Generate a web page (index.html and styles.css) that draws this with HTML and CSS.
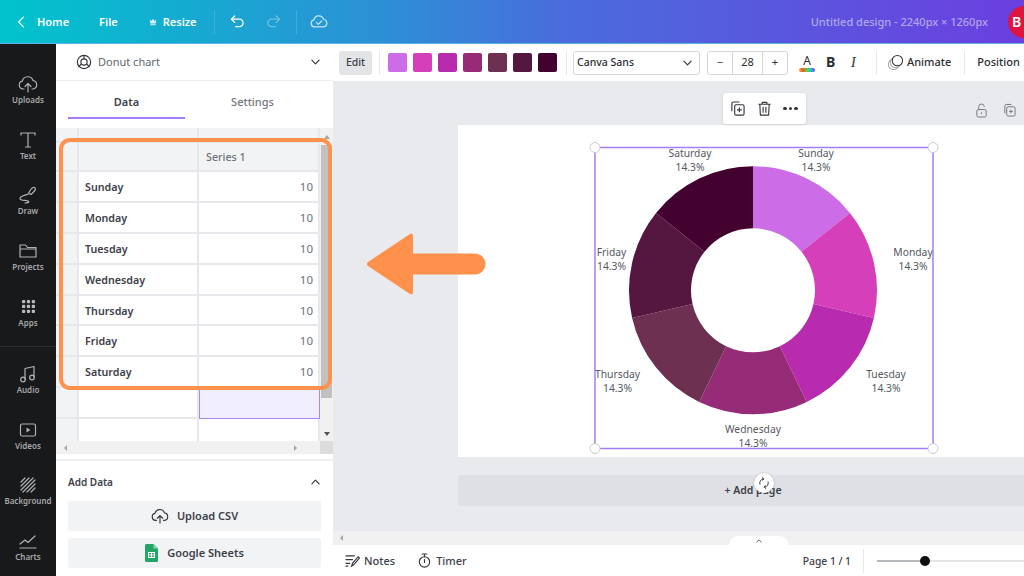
FILE: index.html
```html
<!DOCTYPE html>
<html lang="en">
<head>
<meta charset="utf-8">
<title>Donut chart editor</title>
<link rel="stylesheet" href="styles.css">
</head>
<body>
<div class="app">
  <header class="topbar">
    <svg class="ic back" viewBox="0 0 10 16"><path d="M8 2 2 8l6 6"/></svg>
    <span class="nav home">Home</span>
    <span class="nav file">File</span>
    <svg class="crown" viewBox="0 0 10 9"><path d="M1 1l2 2.500L5 .5l2 3L9 1l-.7 5.500H1.700z"/><rect x="1.700" y="7.300" width="6.600" height="1.200"/></svg>
    <span class="nav">Resize</span>
    <i class="topdiv d1"></i>
    <svg class="ic undo" viewBox="0 0 16 14"><path d="M5 1 1.500 4.500 5 8M2 4.500h8a4 4 0 0 1 0 8H6"/></svg>
    <svg class="ic redo" viewBox="0 0 16 14"><path d="M11 1l3.500 3.500L11 8M14 4.500H6a4 4 0 0 0 0 8h4"/></svg>
    <i class="topdiv d2"></i>
    <svg class="ic cloud" viewBox="0 0 20 14"><path d="M5 13a4 4 0 0 1-.6-7.900A5.500 5.500 0 0 1 15 4.500 4.300 4.300 0 0 1 15 13zM7 8l2.200 2.200L13 6.500"/></svg>
    <span class="title">Untitled design - 2240px × 1260px</span>
    <span class="avatar">B</span>
  </header>
  <div class="body">
    <nav class="rail">
      <div class="rail-item"><svg viewBox="0 0 20 18"><path d="M6 14H5a4 4 0 0 1-.6-7.900A5.500 5.500 0 0 1 15 5.500 4.300 4.300 0 0 1 15 14h-1M10 17V9M7 11.500 10 8.500l3 3"/></svg><span>Uploads</span></div>
      <div class="rail-item"><svg viewBox="0 0 20 18"><path d="M3 4V2h14v2M10 2v14M7.500 16h5"/></svg><span>Text</span></div>
      <div class="rail-item"><svg viewBox="0 0 20 18"><path d="M16.500 1.500c1.500 1 1 2.500-.5 4l-3 3-2.500-1.500 2-3c1.300-2 2.800-3.300 4-2.500zM10.500 8C6 9.500 2 10 2 12.500S8 14 10 15s0 2-3 2"/></svg><span>Draw</span></div>
      <div class="rail-item"><svg viewBox="0 0 20 18"><path d="M2 15V3h5.500l2 2.500H18V15zM2 7h16"/></svg><span>Projects</span></div>
      <div class="rail-item"><svg class="dots" viewBox="0 0 14 14"><rect x="0" y="0" width="3.500" height="3.500" rx="1"/><rect x="5.200" y="0" width="3.500" height="3.500" rx="1"/><rect x="10.500" y="0" width="3.500" height="3.500" rx="1"/><rect x="0" y="5.200" width="3.500" height="3.500" rx="1"/><rect x="5.200" y="5.200" width="3.500" height="3.500" rx="1"/><rect x="10.500" y="5.200" width="3.500" height="3.500" rx="1"/><rect x="0" y="10.500" width="3.500" height="3.500" rx="1"/><rect x="5.200" y="10.500" width="3.500" height="3.500" rx="1"/><rect x="10.500" y="10.500" width="3.500" height="3.500" rx="1"/></svg><span>Apps</span></div>
      <i class="rail-div"></i>
      <div class="rail-item"><svg viewBox="0 0 20 18"><path d="M7 14V3.500L16 1.500V12"/><circle cx="5" cy="14.500" r="2.300"/><circle cx="14" cy="12.500" r="2.300"/></svg><span>Audio</span></div>
      <div class="rail-item"><svg viewBox="0 0 20 18"><rect x="2.500" y="3" width="15" height="12" rx="1.500"/><path class="solid" d="M8.500 6.500v5l4-2.500z"/></svg><span>Videos</span></div>
      <div class="rail-item"><svg viewBox="0 0 20 18"><path d="M3 6 7 2M3 10l8-8M3 14 15 2M5 16 17 4M9 16l8-8M13 16l4-4"/></svg><span>Background</span></div>
      <div class="rail-item"><svg viewBox="0 0 20 18"><path d="M2 12l5-4 3 2.500L17 4M2 16h16"/></svg><span>Charts</span></div>
    </nav>
    <aside class="panel">
      <div class="panel-head">
        <svg class="donut-ic" viewBox="0 0 18 18"><circle cx="9" cy="9" r="7.500"/><circle cx="9" cy="9" r="3.500"/><path d="M9 1.500v4M5.800 11.500l-3 3M12.200 11.500l3 3"/></svg>
        <span class="panel-title">Donut chart</span>
        <svg class="chev" viewBox="0 0 10 6"><path d="M1 1l4 4 4-4"/></svg>
      </div>
      <div class="tabs">
        <div class="tab active">Data</div>
        <div class="tab">Settings</div>
      </div>
      <div class="sheet">
        <div class="sheet-main">
          <div class="grid">
            <div class="c hd top"></div><div class="c hd top"></div><div class="c hd top"></div>
            <div class="c hd"></div><div class="c hd"></div><div class="c hd series">Series 1</div>
            <div class="c hd"></div><div class="c day">Sunday</div><div class="c num">10</div>
            <div class="c hd"></div><div class="c day">Monday</div><div class="c num">10</div>
            <div class="c hd"></div><div class="c day">Tuesday</div><div class="c num">10</div>
            <div class="c hd"></div><div class="c day">Wednesday</div><div class="c num">10</div>
            <div class="c hd"></div><div class="c day">Thursday</div><div class="c num">10</div>
            <div class="c hd"></div><div class="c day">Friday</div><div class="c num">10</div>
            <div class="c hd"></div><div class="c day">Saturday</div><div class="c num">10</div>
            <div class="c hd"></div><div class="c"></div><div class="c picked"></div>
            <div class="c hd"></div><div class="c"></div><div class="c"></div>
          </div>
          <div class="vscroll"><i class="up"></i><i class="thumb"></i><i class="down"></i></div>
        </div>
        <div class="hscroll"><i class="lf"></i><i class="rt"></i><b></b></div>
      </div>
      <div class="add">
        <div class="add-head"><span>Add Data</span><svg class="chev" viewBox="0 0 10 6"><path d="M1 5l4-4 4 4"/></svg></div>
        <div class="btn"><svg class="btn-ic" viewBox="0 0 20 18"><path d="M6 14H5a4 4 0 0 1-.6-7.900A5.500 5.500 0 0 1 15 5.500 4.300 4.300 0 0 1 15 14h-1M10 17V9M7 11.500 10 8.500l3 3"/></svg><span class="btn-t">Upload CSV</span></div>
        <div class="btn"><svg class="sheets" viewBox="0 0 13 18"><path fill="#23a566" d="M1.500 0H8.500L13 4.500V16.500a1.500 1.500 0 0 1-1.500 1.500h-10A1.500 1.500 0 0 1 0 16.500v-15A1.500 1.500 0 0 1 1.500 0z"/><path fill="#8ed1b1" d="M8.500 0 13 4.500H8.500z"/><path fill="#fff" d="M3 8h7v6H3zm1 1v1.500h2V9zm3 0v1.500h2V9zm-3 2.500V13h2v-1.500zm3 0V13h2v-1.500z"/></svg><span class="btn-t">Google Sheets</span></div>
      </div>
    </aside>
    <main class="main">
      <div class="toolbar">
        <span class="edit">Edit</span>
        <i class="vr"></i>
        <div class="swatches">
          <i class="sw s1"></i><i class="sw s2"></i><i class="sw s3"></i><i class="sw s4"></i><i class="sw s5"></i><i class="sw s6"></i><i class="sw s7"></i>
        </div>
        <i class="vr"></i>
        <div class="fontsel"><span class="lift">Canva Sans</span><svg class="chev" viewBox="0 0 10 6"><path d="M1 1l4 4 4-4"/></svg></div>
        <div class="stepper"><span>−</span><span class="size">28</span><span>+</span></div>
        <div class="color-a"><span>A</span><i></i></div>
        <span class="bold">B</span>
        <span class="ital">I</span>
        <i class="vr"></i>
        <span class="animate"><svg viewBox="0 0 18 18"><circle cx="7" cy="11" r="5.500" class="ghost"/><circle cx="9" cy="9" r="5.500" class="ghost"/><circle cx="11" cy="7" r="5.500" class="front"/></svg><span class="lift">Animate</span></span>
        <i class="vr"></i>
        <span class="position">Position</span>
      </div>
      <div class="canvas">
        <div class="page-tools">
          <svg viewBox="0 0 14 16"><rect x="2" y="7" width="10" height="8" rx="1.500"/><path d="M4 7V4a3 3 0 0 1 6 0M7 10v2"/></svg>
          <svg viewBox="0 0 14 16"><rect x="4" y="4" width="9" height="10" rx="1.500"/><path d="M2 11V3a1.500 1.500 0 0 1 1.500-1.500H9M8.500 7v4M6.500 9h4"/></svg>
        </div>
        <div class="page">
          <svg class="chart" viewBox="0 0 566 332">
            <g transform="translate(295 165.300)">
              <path fill="#cc6ce7" d="M0-124A124 124 0 0 1 96.950-77.310L48.470-38.660A62 62 0 0 0 0-62Z"/>
              <path fill="#d53fb9" d="M96.950-77.310A124 124 0 0 1 120.890 27.590L60.450 13.800A62 62 0 0 0 48.470-38.660Z"/>
              <path fill="#b82bae" d="M120.890 27.590A124 124 0 0 1 53.800 111.720L26.900 55.860A62 62 0 0 0 60.450 13.800Z"/>
              <path fill="#962c77" d="M53.800 111.720A124 124 0 0 1-53.800 111.720L-26.900 55.860A62 62 0 0 0 26.900 55.860Z"/>
              <path fill="#6d3051" d="M-53.800 111.720A124 124 0 0 1-120.890 27.590L-60.450 13.800A62 62 0 0 0-26.900 55.860Z"/>
              <path fill="#551640" d="M-120.890 27.590A124 124 0 0 1-96.950-77.310L-48.470-38.660A62 62 0 0 0-60.450 13.800Z"/>
              <path fill="#43012f" d="M-96.950-77.310A124 124 0 0 1 0-124V-62A62 62 0 0 0-48.470-38.660Z"/>
            </g>
            <g class="labels">
              <text x="358" y="32">Sunday</text><text x="358" y="46">14.3%</text>
              <text x="455" y="131">Monday</text><text x="455" y="144.500">14.3%</text>
              <text x="428" y="253">Tuesday</text><text x="428" y="266.500">14.3%</text>
              <text x="295" y="308">Wednesday</text><text x="295" y="322">14.3%</text>
              <text x="159.500" y="253">Thursday</text><text x="159.500" y="266.500">14.3%</text>
              <text x="153.500" y="131">Friday</text><text x="153.500" y="144.500">14.3%</text>
              <text x="232" y="32">Saturday</text><text x="232" y="46">14.3%</text>
            </g>
            <rect class="sel" x="137" y="22.500" width="338" height="301"/>
            <circle class="handle" cx="137" cy="22.500" r="5"/><circle class="handle" cx="475" cy="22.500" r="5"/>
            <circle class="handle" cx="137" cy="323.500" r="5"/><circle class="handle" cx="475" cy="323.500" r="5"/>
          </svg>
        </div>
        <div class="addpage">+ Add page</div>
        <div class="float">
          <svg viewBox="0 0 16 16"><rect x="5" y="4" width="10" height="11" rx="1.500"/><path d="M2 11V2.500A1.500 1.500 0 0 1 3.500 1H10M10 7v5M7.500 9.500h5"/></svg>
          <svg viewBox="0 0 16 16"><path d="M1.500 3.500h13M5.500 3.500V1.500h5v2M3 3.500l.6 11.500h8.800L13 3.500M6.500 6.500v6M9.500 6.500v6"/></svg>
          <span class="more"><i></i><i></i><i></i></span>
        </div>
        <div class="rotate"><svg viewBox="0 0 12 12"><path d="M2 7.500A4.300 4.300 0 0 1 5.500 1.800M10 4.500a4.300 4.300 0 0 1-3.500 5.700M4 .5l1.800 1.300L4.500 3.500M8 11.500 6.200 10.200 7.500 8.500"/></svg></div>
      </div>
      <div class="mscroll"><i></i><div class="pull"><svg class="chev" viewBox="0 0 10 6"><path d="M1 5l4-4 4 4"/></svg></div></div>
      <footer class="footer">
        <svg class="ft-ic" viewBox="0 0 16 14"><path d="M1 2h9M1 6h7M1 10h4M1 13h2M7 13l1-3 6-7 1.500 1.300-6 7z"/></svg>
        <span class="ft-notes">Notes</span>
        <svg class="ft-ic" viewBox="0 0 14 16"><circle cx="7" cy="9.500" r="5.500"/><path d="M4.500 1h5M7 1v3M7 7v3"/></svg>
        <span>Timer</span>
        <span class="pageno">Page 1 / 1</span>
        <i class="vr ft-vr"></i>
        <div class="slider"><i class="fill"></i><i class="knob"></i></div>
      </footer>
    </main>
  </div>
  <div class="callout"></div>
  <svg class="arrow" viewBox="0 0 122 66"><path d="M45 3 3 31a2.500 2.500 0 0 0 0 4l42 28c1.500 1 3 0 3-2V43.500h62a10.500 10.500 0 0 0 0-21H48V5c0-2-1.500-3-3-2z"/></svg>
</div>
</body>
</html>
```
FILE: styles.css
```css
* { box-sizing: border-box; }
html, body { margin: 0; height: 100%; overflow: hidden; }
body { font-family: "Noto Sans", "Liberation Sans", sans-serif; color: #3c4048; background: #fff; }
i { display: block; font-style: normal; }
.app { position: relative; width: 1024px; height: 576px; display: flex; flex-direction: column; overflow: hidden; }

.topbar { height: 44px; flex: none; display: flex; align-items: center; color: #fff; padding-left: 17px; background: linear-gradient(90deg, #00c4cc 0%, #2d8fd6 38%, #4a6cdc 55%, #6b3fe0 100%); border-bottom: 1px solid #5fb3e6; }
.ic { fill: none; stroke: #fff; stroke-width: 1.400; stroke-linecap: round; stroke-linejoin: round; }
.back { width: 8px; height: 14px; margin-right: 12px; }
.nav { font-size: 11px; font-weight: 600; white-space: nowrap; }
.home { margin-right: 30px; }
.file { margin-right: 31px; }
.crown { width: 8px; height: 8px; fill: #dff3f8; margin-right: 6px; }
.topdiv { width: 1px; height: 24px; background: rgba(255,255,255,.15); }
.d1 { margin-left: 17px; }
.undo { width: 15px; height: 13px; margin-left: 15px; }
.redo { width: 15px; height: 13px; margin-left: 21px; opacity: .35; }
.d2 { margin-left: 15px; }
.cloud { width: 18px; height: 13px; margin-left: 13px; opacity: .75; }
.title { margin-left: auto; font-size: 11px; font-weight: 500; color: rgba(255,255,255,.5); white-space: nowrap; }
.avatar { flex: none; width: 32px; height: 32px; margin: 0 -16px 0 20px; padding-left: 4px; border-radius: 50%; background: #e0143f; font-size: 14px; font-weight: 600; line-height: 32px; }

.body { flex: 1; display: flex; min-height: 0; }
.rail { width: 56px; flex: none; background: #18191b; padding-top: 12px; display: flex; flex-direction: column; }
.rail-item { height: 55.700px; flex: none; display: flex; flex-direction: column; align-items: center; color: #a6a7a9; font-size: 8px; font-weight: 600; line-height: 10px; padding-top: 19px; }
.rail-item svg { width: 20px; height: 18px; flex: none; fill: none; stroke: #b0b1b3; stroke-width: 1.200; stroke-linecap: round; stroke-linejoin: round; }
.rail-item svg.dots { width: 13px; height: 13px; margin: 2px 0 3px; fill: #b8b9bb; stroke: none; }
.rail-item svg .solid { fill: #b0b1b3; stroke: none; }
.rail-item span { margin-top: 2px; }
.rail-div { height: 1px; flex: none; background: #2c2d30; margin: 11.500px 0 -1px; }

.panel { width: 277px; flex: none; display: flex; flex-direction: column; background: #fff; }
.panel-head { height: 37px; flex: none; display: flex; align-items: center; padding: 0 13px 0 20px; border-bottom: 1px solid #eceef0; }
.donut-ic { width: 16px; height: 16px; fill: none; stroke: #33363b; stroke-width: 1.300; margin-right: 6px; }
.panel-title { font-size: 11px; color: #62666d; flex: 1; padding-bottom: 2px; }
.chev { width: 9px; height: 6px; flex: none; fill: none; stroke: #33363b; stroke-width: 1.300; stroke-linecap: round; stroke-linejoin: round; }
.tabs { height: 38px; flex: none; display: flex; gap: 9px; padding: 0 12px; margin-bottom: 9px; }
.tab { width: 117px; text-align: center; font-size: 11px; font-weight: 500; line-height: 42px; color: #72767d; }
.tab.active { color: #3c4048; font-weight: 600; border-bottom: 2px solid #a57cf5; }

.sheet { flex: none; background: #f1f1f1; }
.sheet-main { display: flex; height: 313px; overflow: hidden; }
.grid { display: grid; grid-template-columns: 23px 120px 121px; grid-template-rows: 15px 29px repeat(9, 30.900px); flex: none; }
.c { background: #fff; border-right: 2px solid #e6e8ec; border-bottom: 2px solid #e6e8ec; min-width: 0; }
.hd { background: #f2f3f5; }
.series { font-size: 10.700px; color: #6d7178; font-weight: 500; line-height: 29px; padding-left: 7px; }
.day { font-size: 10.700px; font-weight: 600; color: #3c4048; line-height: 31px; padding-left: 6px; }
.num { font-size: 11.500px; color: #6d7178; text-align: right; line-height: 30px; padding-right: 5px; }
.picked { background: #f0edfd; border: 1px solid #a98bf0; }
.vscroll { width: 13px; flex: none; display: flex; flex-direction: column; align-items: center; }
.thumb { width: 11px; height: 253px; background: #c1c1c1; margin-top: 6px; }
.up, .down { width: 0; height: 0; border: 3px solid transparent; }
.up { border-bottom: 4px solid #a5a5a5; margin-top: 4px; }
.down { border-top: 4px solid #555; margin-top: 34px; }
.hscroll { position: relative; height: 13px; display: flex; justify-content: space-between; align-items: center; padding: 0 33px 0 5px; }
.lf, .rt { width: 0; height: 0; border: 3px solid transparent; }
.lf { border-right: 3px solid #a5a5a5; }
.rt { border-left: 3px solid #a5a5a5; }
.hscroll b { position: absolute; right: 0; top: 0; width: 13px; height: 13px; background: #dcdcdc; }
.add { flex: 1; margin-top: 5px; padding: 0 12px; border-top: 2px solid #eef0f2; }
.add-head { height: 40px; display: flex; align-items: center; justify-content: space-between; font-size: 10px; font-weight: 600; padding: 2px 1px 0 0; }
.btn { height: 30px; margin-bottom: 7px; background: #f2f3f5; border-radius: 3px; display: flex; align-items: center; justify-content: center; font-size: 11px; font-weight: 600; color: #3c4048; }
.btn-t { padding-bottom: 2px; }
.btn-ic { width: 18px; height: 16px; margin-right: 8px; fill: none; stroke: #33363b; stroke-width: 1.300; stroke-linecap: round; stroke-linejoin: round; }
.sheets { width: 13px; height: 18px; margin-right: 9px; }

.main { flex: 1; min-width: 0; display: flex; flex-direction: column; background: #e9eaee; }
.toolbar { height: 37px; flex: none; display: flex; align-items: center; background: #fff; padding-left: 6px; white-space: nowrap; }
.edit { width: 33px; height: 24px; border-radius: 3px; background: #e2e4e6; font-size: 10.500px; font-weight: 500; text-align: center; line-height: 22px; margin-right: 7px; }
.vr { width: 1px; height: 24px; flex: none; background: #e6e8ea; }
.swatches { display: flex; gap: 6px; margin: 0 9px 0 8px; }
.sw { width: 19px; height: 19px; border-radius: 2px; }
.s1 { background: #cc6ce7; } .s2 { background: #d53fb9; } .s3 { background: #b82bae; } .s4 { background: #962c77; }
.s5 { background: #6d3051; } .s6 { background: #551640; } .s7 { background: #43012f; }
.lift { padding-bottom: 2px; }
.fontsel { width: 127px; height: 24px; margin-left: 6px; padding: 0 7px 0 3px; border: 1px solid #d4d7db; border-radius: 3px; display: flex; align-items: center; justify-content: space-between; font-size: 10.500px; font-weight: 500; color: #2b2e34; }
.stepper { width: 81px; height: 24px; margin-left: 7px; border: 1px solid #d4d7db; border-radius: 3px; display: grid; grid-template-columns: 24px 1fr 24px; text-align: center; font-size: 11px; line-height: 20px; color: #2b2e34; }
.size { border: solid #d4d7db; border-width: 0 1px; }
.color-a { width: 16px; margin-left: 11px; font-size: 12px; line-height: 14px; text-align: center; color: #2b2e34; }
.color-a i { height: 4px; border-radius: 2px; background: linear-gradient(90deg, #f5a623, #e53, #5d3, #2bd, #83f); }
.bold { margin-left: 11px; font-size: 14px; font-weight: 700; width: 10px; color: #2b2e34; padding-bottom: 2px; }
.ital { margin-left: 15px; margin-right: 20px; font-family: "Liberation Serif", serif; font-size: 14px; font-style: italic; width: 5px; color: #2b2e34; }
.animate { display: flex; align-items: center; gap: 3px; margin: 0 13px 0 10px; font-size: 11px; font-weight: 500; color: #2b2e34; }
.animate svg { width: 17px; height: 17px; fill: #fff; stroke: #33363b; stroke-width: 1.100; }
.animate .ghost { stroke: #aaa; }
.position { margin-left: 12px; font-size: 11px; font-weight: 500; color: #2b2e34; padding-bottom: 2px; }

.canvas { position: relative; flex: 1; min-height: 0; padding-left: 125px; overflow: hidden; }
.page-tools { height: 44px; display: flex; justify-content: flex-end; align-items: flex-end; gap: 15px; padding: 0 8px 7px 0; }
.page-tools svg { width: 13px; height: 15px; fill: none; stroke: #6f7378; stroke-width: 1; }
.page { height: 332px; background: #fff; }
.chart { display: block; width: 566px; height: 332px; }
.labels text { font-size: 10.300px; fill: #55585f; text-anchor: middle; }
.sel { fill: none; stroke: #a57cf5; stroke-width: 1.500; }
.handle { fill: #fff; stroke: #c9ccd1; stroke-width: 1; }
.addpage { height: 31px; margin-top: 18px; padding-left: 24px; background: #dfe0e5; border-radius: 3px 0 0 3px; text-align: center; font-size: 10.500px; font-weight: 600; line-height: 31px; color: #3c4048; }
.float { position: absolute; left: 390px; top: 12px; width: 83px; height: 31px; background: #fff; border-radius: 3px; box-shadow: 0 1px 3px rgba(0,0,0,.12); display: flex; align-items: center; gap: 11.500px; padding-left: 7px; }
.float svg { width: 15px; height: 15px; fill: none; stroke: #33363b; stroke-width: 1.200; stroke-linejoin: round; }
.more { display: flex; gap: 2px; }
.more i { width: 3.500px; height: 3.500px; border-radius: 50%; background: #33363b; }
.rotate { position: absolute; left: 421px; top: 392px; width: 20px; height: 20px; border-radius: 50%; background: #fff; box-shadow: 0 0 2px rgba(0,0,0,.25); display: flex; align-items: center; justify-content: center; }
.rotate svg { width: 12px; height: 12px; fill: none; stroke: #33363b; stroke-width: 1; }
.mscroll { height: 14px; flex: none; position: relative; background: #f0f0f0; display: flex; align-items: center; padding-left: 4px; }
.mscroll > i { width: 0; height: 0; border: 3px solid transparent; border-right: 3px solid #a5a5a5; }
.pull { position: absolute; left: 396px; bottom: 0; width: 60px; height: 9px; background: #fff; border-radius: 9px 9px 0 0; display: flex; align-items: center; justify-content: center; }
.pull .chev { width: 6px; height: 4px; }
.footer { height: 31px; flex: none; background: #fff; display: flex; align-items: center; padding-left: 12px; font-size: 11px; font-weight: 500; color: #3c4048; }
.ft-ic { width: 15px; height: 15px; fill: none; stroke: #33363b; stroke-width: 1.200; stroke-linecap: round; margin-right: 4px; }
.ft-notes { margin-right: 22px; }
.pageno { margin-left: auto; font-size: 10.300px; }
.ft-vr { margin: 0 13px 0 12px; }
.slider { position: relative; width: 147px; height: 2px; background: #e3e4e6; flex: none; }
.fill { width: 48px; height: 2px; background: #b7babd; }
.knob { position: absolute; left: 43px; top: -4px; width: 10px; height: 10px; border-radius: 50%; background: #0e0e10; }

.callout { position: absolute; left: 59px; top: 138px; width: 273px; height: 252px; border: 4.500px solid #ff914d; border-radius: 11px; }
.arrow { position: absolute; left: 365px; top: 231px; width: 122px; height: 66px; fill: #ff914d; }
```
